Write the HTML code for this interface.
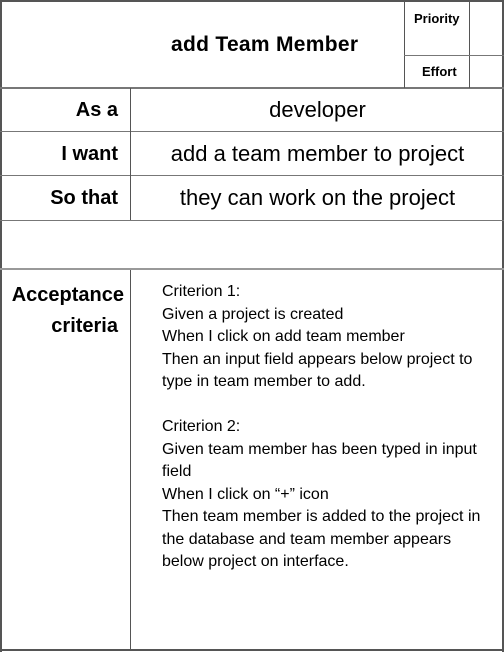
<!DOCTYPE html>
<html><head><meta charset="utf-8"><style>
body{margin:0;width:504px;height:652px;background:#fff;position:relative;overflow:hidden;font-family:"Liberation Sans",sans-serif;color:#000}
.l{position:absolute;background:#777}
.t{position:absolute;white-space:nowrap}
.b{font-weight:bold}
</style></head><body>
<div class="l" style="left:0;top:0;width:504px;height:2px;background:#555"></div>
<div class="l" style="left:0;top:0;width:2px;height:652px;background:#555"></div>
<div class="l" style="left:502px;top:0;width:2px;height:652px;background:#555"></div>
<div class="l" style="left:0;top:649px;width:504px;height:2px;background:#555"></div>
<div class="l" style="left:0;top:87px;width:504px;height:2px"></div>
<div class="l" style="left:0;top:131px;width:504px;height:1px"></div>
<div class="l" style="left:0;top:175px;width:504px;height:1px"></div>
<div class="l" style="left:0;top:220px;width:504px;height:1px"></div>
<div class="l" style="left:0;top:268px;width:504px;height:2px;background:#999"></div>
<div class="l" style="left:130px;top:88px;width:1px;height:132px;background:#555"></div>
<div class="l" style="left:130px;top:270px;width:1px;height:380px;background:#555"></div>
<div class="l" style="left:404px;top:2px;width:1px;height:86px;background:#555"></div>
<div class="l" style="left:469px;top:2px;width:1px;height:86px;background:#555"></div>
<div class="l" style="left:404px;top:55px;width:100px;height:1px"></div>
<div class="t b" style="left:171px;top:33px;font-size:21px;letter-spacing:0.3px">add Team Member</div>
<div class="t b" style="left:414px;top:11px;font-size:13px">Priority</div>
<div class="t b" style="left:422px;top:64px;font-size:13px">Effort</div>
<div class="t b" style="right:386px;top:99px;font-size:20px">As a</div>
<div class="t b" style="right:386px;top:143px;font-size:20px">I want</div>
<div class="t b" style="right:386px;top:187px;font-size:20px">So that</div>
<div class="t" style="left:131px;width:373px;text-align:center;top:97px;font-size:22px">developer</div>
<div class="t" style="left:131px;width:373px;text-align:center;top:141px;font-size:22px">add a team member to project</div>
<div class="t" style="left:131px;width:373px;text-align:center;top:185px;font-size:22px">they can work on the project</div>
<div class="t b" style="right:386px;top:280px;font-size:20px;text-align:right;line-height:31px"><span style="margin-right:-6px">Acceptance</span><br>criteria</div>
<div class="t" style="left:162px;top:281px;font-size:16px;line-height:22.5px">Criterion 1:<br>Given a project is created<br>When I click on add team member<br>Then an input field appears below project to<br>type in team member to add.<br><br>Criterion 2:<br>Given team member has been typed in input<br>field<br>When I click on “+” icon<br>Then team member is added to the project in<br>the database and team member appears<br>below project on interface.</div>
</body></html>
